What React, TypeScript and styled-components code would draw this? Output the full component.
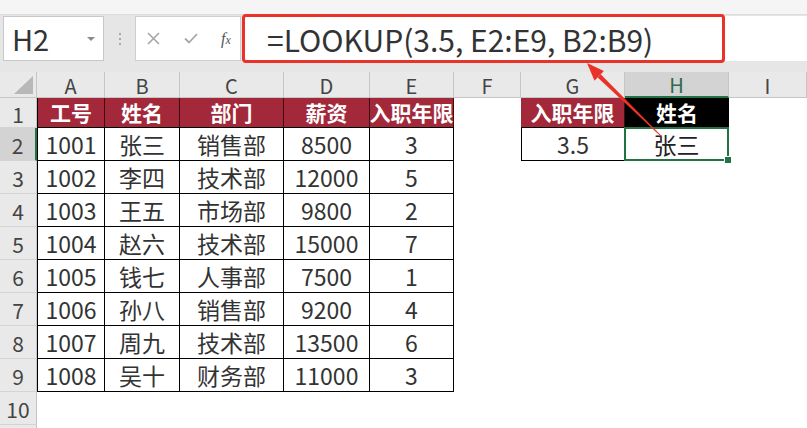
import React from 'react';
import styled, { createGlobalStyle, css } from 'styled-components';

const FONT = `"Noto Sans CJK SC", "Noto Sans", sans-serif`;

const GlobalStyle = createGlobalStyle`
  html, body { margin: 0; padding: 0; background: #fff; }
  body { font-family: ${FONT}; }
`;

const Page = styled.div`
  position: relative;
  width: 807px;
  height: 428px;
  overflow: hidden;
  background: #fff;
  display: flex;
  flex-direction: column;
`;

const TopStrip = styled.div`
  flex: none;
  height: 14px;
  background: #f5f5f5;
  border-bottom: 1px solid #dcdcdc;
`;

const FormulaBar = styled.div`
  flex: none;
  height: 57px;
  box-sizing: border-box;
  padding: 1px 0 0 3px;
  background: #e6e6e6;
  display: flex;
  align-items: flex-start;
`;

const NameBox = styled.div`
  box-sizing: border-box;
  width: 101px;
  height: 45px;
  background: #fff;
  border: 1px solid #c8c8c8;
  display: flex;
  align-items: center;
  padding: 0 8px 0 8px;
  font-size: 29px;
  color: #333;
  line-height: 1;
`;

const DropCaret = styled.span`
  margin-left: auto;
  width: 0;
  height: 0;
  border-left: 4px solid transparent;
  border-right: 4px solid transparent;
  border-top: 4px solid #8a8a8a;
`;

const Grip = styled.div`
  width: 31px;
  height: 45px;
  display: flex;
  flex-direction: column;
  align-items: center;
  justify-content: center;
  gap: 3px;
`;

const GripDot = styled.span`
  width: 2px;
  height: 2px;
  background: #a8a8a8;
`;

const FxBox = styled.div`
  box-sizing: border-box;
  width: 106px;
  height: 45px;
  background: #fff;
  border: 1px solid #cfcfcf;
  display: flex;
  align-items: center;
  padding-left: 11px;
`;

const ToolIcon = styled.span`
  width: 37px;
  display: flex;
  align-items: center;
  justify-content: flex-start;
`;

const FxLabel = styled.span`
  font-family: "Liberation Serif", "DejaVu Serif", serif;
  font-style: italic;
  font-size: 16px;
  color: #555;
  line-height: 1;
  & > small {
    font-size: 12px;
  }
`;

const FormulaInput = styled.div`
  position: relative;
  flex: 1;
  height: 45px;
  margin-left: 2px;
  background: #fff;
  display: flex;
  align-items: center;
  padding-left: 24px;
  font-size: 30px;
  color: #333;
  line-height: 1;
  white-space: nowrap;
`;

const RedFrame = styled.div`
  position: absolute;
  left: -1px;
  top: -2px;
  width: 483px;
  height: 49px;
  box-sizing: border-box;
  border: 3px solid #ea3229;
  border-radius: 4px;
  pointer-events: none;
`;

const Sheet = styled.div`
  flex: 1;
  display: grid;
  grid-template-columns: 37px 68px 75px 104px 86px 84px 67px 104px 104px 1fr;
  grid-template-rows: 26px 30px;
  grid-auto-rows: 33px;
  font-size: 23px;
  line-height: 1;
`;

const Corner = styled.div`
  position: relative;
  box-sizing: border-box;
  background: #e9e9e9;
  border-right: 1px solid #c6c6c6;
  border-bottom: 1px solid #c6c6c6;
  &::after {
    content: '';
    position: absolute;
    right: 3px;
    bottom: 3px;
    width: 19px;
    height: 18px;
    background: #b8b8b8;
    clip-path: polygon(100% 0, 100% 100%, 0 100%);
  }
`;

const ColHead = styled.div<{ $active?: boolean }>`
  box-sizing: border-box;
  background: ${p => (p.$active ? '#d3d3d3' : '#e9e9e9')};
  color: ${p => (p.$active ? '#2f6b4c' : '#444')};
  border-right: 1px solid #c6c6c6;
  border-bottom: ${p => (p.$active ? '2px solid #217346' : '1px solid #c6c6c6')};
  display: flex;
  align-items: center;
  justify-content: center;
  font-size: 20px;
  padding-top: 2px;
`;

const RowHead = styled.div<{ $active?: boolean }>`
  box-sizing: border-box;
  background: ${p => (p.$active ? '#d3d3d3' : '#e9e9e9')};
  color: #444;
  border-right: ${p => (p.$active ? '2px solid #217346' : '1px solid #c6c6c6')};
  border-bottom: 1px solid #d4d4d4;
  display: flex;
  align-items: center;
  justify-content: center;
  font-size: 21px;
  padding-top: 3px;
`;

type Kind = 'blank' | 'head' | 'darkHead' | 'data' | 'selected';

const Cell = styled.div<{ $kind: Kind; $left?: boolean }>`
  position: relative;
  box-sizing: border-box;
  display: flex;
  align-items: center;
  justify-content: center;
  white-space: nowrap;
  background: #fff;
  color: #333;
  ${p =>
    p.$kind === 'head' &&
    css`
      background: #a3283a;
      color: #fff;
      font-weight: 700;
      font-size: 21px;
      border-right: 1px solid #3a0e14;
      border-bottom: 1px solid #000;
    `}
  ${p =>
    p.$kind === 'darkHead' &&
    css`
      background: #000;
      color: #fff;
      font-weight: 700;
      font-size: 21px;
      border-bottom: 1px solid #000;
    `}
  ${p =>
    p.$kind === 'data' &&
    css`
      border-right: 1px solid #000;
      border-bottom: 1px solid #000;
    `}
  ${p =>
    p.$kind === 'selected' &&
    css`
      color: #222;
      border: 2px solid #217346;
      margin: -1px 0 0 -1px;
      z-index: 2;
      &::after {
        content: '';
        position: absolute;
        right: -5px;
        bottom: -5px;
        width: 6px;
        height: 6px;
        background: #217346;
        border: 1px solid #fff;
      }
    `}
  ${p => p.$left && css`border-left: 1px solid #000;`}
`;

const Annotation = styled.svg`
  position: absolute;
  left: 0;
  top: 0;
  pointer-events: none;
  z-index: 5;
`;

const COLS = ['A', 'B', 'C', 'D', 'E', 'F', 'G', 'H', 'I'];
const HEAD = ['工号', '姓名', '部门', '薪资', '入职年限'];
const DATA: (string | number)[][] = [
  [1001, '张三', '销售部', 8500, 3],
  [1002, '李四', '技术部', 12000, 5],
  [1003, '王五', '市场部', 9800, 2],
  [1004, '赵六', '技术部', 15000, 7],
  [1005, '钱七', '人事部', 7500, 1],
  [1006, '孙八', '销售部', 9200, 4],
  [1007, '周九', '技术部', 13500, 6],
  [1008, '吴十', '财务部', 11000, 3],
];

function renderRow(r: number) {
  const cells: React.ReactNode[] = [];
  cells.push(
    <RowHead key={`rh${r}`} $active={r === 2}>
      {r <= 10 ? r : ''}
    </RowHead>
  );
  for (let c = 0; c < 9; c++) {
    const key = `c${r}-${c}`;
    if (r === 1 && c < 5) {
      cells.push(
        <Cell key={key} $kind="head" $left={c === 0}>
          {HEAD[c]}
        </Cell>
      );
    } else if (r >= 2 && r <= 9 && c < 5) {
      cells.push(
        <Cell key={key} $kind="data" $left={c === 0}>
          {DATA[r - 2][c]}
        </Cell>
      );
    } else if (r === 1 && c === 6) {
      cells.push(
        <Cell key={key} $kind="head">
          入职年限
        </Cell>
      );
    } else if (r === 1 && c === 7) {
      cells.push(
        <Cell key={key} $kind="darkHead">
          姓名
        </Cell>
      );
    } else if (r === 2 && c === 6) {
      cells.push(
        <Cell key={key} $kind="data" $left>
          3.5
        </Cell>
      );
    } else if (r === 2 && c === 7) {
      cells.push(
        <Cell key={key} $kind="selected">
          张三
        </Cell>
      );
    } else {
      cells.push(<Cell key={key} $kind="blank" />);
    }
  }
  return cells;
}

export default function App() {
  const rows = Array.from({ length: 11 }, (_, i) => i + 1);
  return (
    <>
      <GlobalStyle />
      <Page>
        <TopStrip />
        <FormulaBar>
          <NameBox>
            H2
            <DropCaret />
          </NameBox>
          <Grip>
            <GripDot />
            <GripDot />
            <GripDot />
          </Grip>
          <FxBox>
            <ToolIcon>
              <svg width="13" height="13" viewBox="0 0 13 13">
                <path d="M1 1 L12 12 M12 1 L1 12" stroke="#a6a6a6" strokeWidth="1.6" fill="none" />
              </svg>
            </ToolIcon>
            <ToolIcon>
              <svg width="14" height="11" viewBox="0 0 14 11">
                <path d="M1 5.5 L5 9.5 L13 1" stroke="#a6a6a6" strokeWidth="1.8" fill="none" />
              </svg>
            </ToolIcon>
            <FxLabel>
              f<small>x</small>
            </FxLabel>
          </FxBox>
          <FormulaInput>
            =LOOKUP(3.5, E2:E9, B2:B9)
            <RedFrame />
          </FormulaInput>
        </FormulaBar>
        <Sheet>
          <Corner />
          {COLS.map(c => (
            <ColHead key={c} $active={c === 'H'}>
              {c}
            </ColHead>
          ))}
          {rows.map(r => renderRow(r))}
        </Sheet>
        <Annotation width="807" height="428" viewBox="0 0 807 428">
          <polygon points="597.7,77.5 600.7,74.3 662.35,136.65 661.65,137.35" fill="#ea3229" />
          <polygon points="587,63 603.9,71 594.5,80.8" fill="#ea3229" />
        </Annotation>
      </Page>
    </>
  );
}
